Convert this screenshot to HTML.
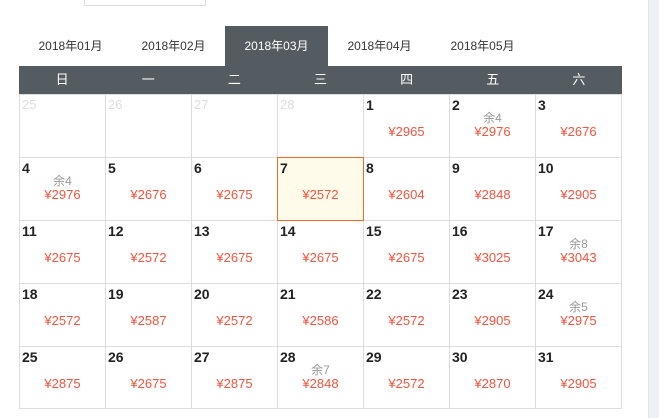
<!DOCTYPE html><html><head><meta charset="utf-8"><style>
*{margin:0;padding:0;box-sizing:border-box}
body{width:659px;height:418px;overflow:hidden;background:#fff;font-family:"Liberation Sans","Noto Sans CJK SC",sans-serif;position:relative}
.box{position:absolute;left:84px;top:-2px;width:122px;height:8px;border:1px solid #ddd;border-top:none}
.sb{position:absolute;left:648px;top:0;width:11px;height:418px;background:#eef0f3;border-left:1px solid #e2e4e8}
.tab{position:absolute;top:26px;height:40px;width:103px;text-align:center;line-height:40px;font-size:12px;color:#333}
.tab.on{background:#555c61;color:#fff}
.hd{position:absolute;left:19px;top:66px;width:603px;height:28px;background:#555c61;display:flex}
.hd div{flex:1;text-align:center;line-height:28px;color:#fff;font-size:13px}
.c{position:absolute;width:87px;height:64px;border:1px solid #ddd;text-align:center}
.n{position:absolute;left:2px;top:2px;font-size:14px;font-weight:bold;color:#222}
.g{color:#ddd;font-weight:normal;font-size:13px}
.y{position:absolute;left:0;right:0;top:14px;font-size:12px;color:#999}
.p{position:absolute;left:0;right:0;top:29px;font-size:13px;color:#f5533d}
.sel{background:#fffbeb;border:1px solid #f06a2a;z-index:2}
</style></head><body>
<div class="box"></div><div class="sb"></div>
<div class="tab" style="left:19px">2018年01月</div>
<div class="tab" style="left:122px">2018年02月</div>
<div class="tab on" style="left:225px">2018年03月</div>
<div class="tab" style="left:328px">2018年04月</div>
<div class="tab" style="left:431px">2018年05月</div>
<div class="hd"><div>日</div><div>一</div><div>二</div><div>三</div><div>四</div><div>五</div><div>六</div></div>
<div id="g"></div>
<script>
var d=[["25g"],["26g"],["27g"],["28g"],["1","","2965"],["2","4","2976"],["3","","2676"],
["4","4","2976"],["5","","2676"],["6","","2675"],["7","","2572","s"],["8","","2604"],["9","","2848"],["10","","2905"],
["11","","2675"],["12","","2572"],["13","","2675"],["14","","2675"],["15","","2675"],["16","","3025"],["17","8","3043"],
["18","","2572"],["19","","2587"],["20","","2572"],["21","","2586"],["22","","2572"],["23","","2905"],["24","5","2975"],
["25","","2875"],["26","","2675"],["27","","2875"],["28","7","2848"],["29","","2572"],["30","","2870"],["31","","2905"]];
var h="";d.forEach(function(e,i){var x=19+(i%7)*86,y=94+Math.floor(i/7)*63;var g=e[0].indexOf("g")>0;
h+='<div class="c'+(e[3]?' sel':'')+'" style="left:'+x+'px;top:'+y+'px;height:'+(i>=28?63:64)+'px"><span class="n'+(g?' g':'')+'">'+e[0].replace("g","")+'</span>'+(e[1]?'<span class="y">余'+e[1]+'</span>':'')+(e[2]?'<span class="p">¥'+e[2]+'</span>':'')+'</div>';});
document.getElementById("g").innerHTML=h;
</script>
</body></html>
